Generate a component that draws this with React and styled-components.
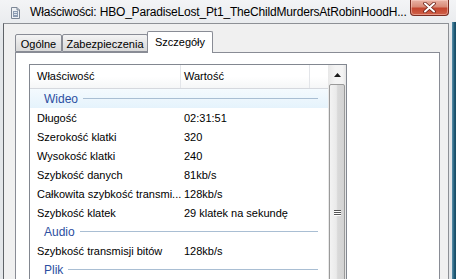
import React from "react";
import styled, { createGlobalStyle } from "styled-components";

const Global = createGlobalStyle`
  html, body { margin: 0; padding: 0; }
  body { width: 456px; height: 279px; overflow: hidden; background: #e6e9ec; }
  #root { width: 456px; height: 279px; }
`;

const UI_FONT = `"Liberation Sans", Arial, sans-serif`;

const Window = styled.div`
  display: flex;
  width: 456px;
  height: 279px;
  overflow: hidden;
  font-family: ${UI_FONT};
  background: linear-gradient(#f3f4f6, #e3e6e9 40px, #e3e6e9);
`;

const Main = styled.div`
  display: flex;
  flex-direction: column;
  width: 452px;
  min-height: 0;
`;

const EdgeStrip = styled.div`
  width: 4px;
  margin-top: 22px;
  background: linear-gradient(90deg, #5d93ad, #1f5a76 60%, #174a63);
`;

const TitleBar = styled.div`
  display: flex;
  align-items: flex-start;
  height: 23px;
  flex-shrink: 0;
`;

const AppIcon = styled.svg`
  width: 9px;
  height: 12px;
  margin: 7px 0 0 11px;
  flex-shrink: 0;
`;

const TitleText = styled.div`
  margin: 4px 0 0 10px;
  font-size: 12px;
  line-height: 16px;
  color: #000;
  white-space: nowrap;
  letter-spacing: -0.18px;
`;

const CloseButton = styled.div`
  margin-left: auto;
  margin-right: 3px;
  width: 39px;
  height: 16px;
  box-sizing: border-box;
  border: 1px solid #7a2d22;
  border-top: none;
  border-radius: 0 0 4px 4px;
  background: linear-gradient(#eab3a5, #d98b78 45%, #c4452e 55%, #d0624a);
  display: flex;
  align-items: center;
  justify-content: center;
  box-shadow: inset 0 0 0 1px rgba(255, 220, 210, 0.45);
`;

const FrameBody = styled.div`
  flex: 1;
  display: flex;
  padding-left: 3px;
  min-height: 0;
`;

const Client = styled.div`
  width: 446px;
  box-sizing: border-box;
  border-left: 1px solid #5f6368;
  border-top: 1px solid #8d9095;
  border-right: 1px solid #8d9095;
  background: #f0f0f0;
  padding: 7px 8px 0 11px;
  display: flex;
  flex-direction: column;
  min-height: 0;
`;

const TabStrip = styled.div`
  display: flex;
  align-items: flex-end;
  height: 21px;
  position: relative;
  z-index: 1;
`;

const Tab = styled.div`
  box-sizing: border-box;
  width: ${(p) => p.$w}px;
  height: ${(p) => (p.$active ? 22 : 18)}px;
  margin-bottom: ${(p) => (p.$active ? -1 : 0)}px;
  margin-left: ${(p) => p.$ml || 0}px;
  border: 1px solid #898c95;
  border-bottom: ${(p) => (p.$active ? "none" : "1px solid #898c95")};
  border-radius: 2px 2px 0 0;
  background: ${(p) =>
    p.$active ? "#ffffff" : "linear-gradient(#f4f4f4, #e6e6e6 50%, #dadada)"};
  font-size: 11px;
  color: #000;
  display: flex;
  justify-content: center;
  padding-top: ${(p) => (p.$active ? 3 : 2)}px;
  line-height: 14px;
  white-space: nowrap;
`;

const Panel = styled.div`
  flex: 1;
  box-sizing: border-box;
  width: 425px;
  border: 1px solid #898c95;
  border-bottom: none;
  background: #ffffff;
  padding: 11px 0 0 13px;
  min-height: 0;
`;

const ListView = styled.div`
  display: flex;
  width: 318px;
  height: 260px;
  box-sizing: border-box;
  border: 1px solid #828790;
  border-bottom: none;
  background: #fff;
`;

const ListBody = styled.div`
  width: 298px;
  display: flex;
  flex-direction: column;
`;

const Header = styled.div`
  display: flex;
  height: 23px;
  border-bottom: 1px solid #d5d8de;
  background: linear-gradient(#ffffff, #ffffff 50%, #f5f6f7);
  flex-shrink: 0;
`;

const HeaderCell = styled.div`
  box-sizing: border-box;
  width: ${(p) => p.$w}px;
  flex: ${(p) => (p.$fill ? 1 : "none")};
  padding-left: ${(p) => p.$pl || 0}px;
  border-right: ${(p) => (p.$fill ? "none" : "1px solid #e3e5e9")};
  font-size: 11px;
  line-height: 23px;
  color: #000;
  white-space: nowrap;
`;

const Row = styled.div`
  display: flex;
  height: 19px;
  align-items: center;
  font-size: 11px;
  color: #000;
  white-space: nowrap;
  flex-shrink: 0;
`;

const NameCell = styled.div`
  width: 151px;
  box-sizing: border-box;
  padding-left: 7px;
  overflow: hidden;
`;

const ValueCell = styled.div`
  padding-left: 3px;
`;

const GroupRow = styled.div`
  display: flex;
  align-items: center;
  height: 19px;
  padding: 0 10px 0 14px;
  flex-shrink: 0;
  background: ${(p) =>
    p.$hot ? "linear-gradient(#f4fafe, #e5f3fc)" : "transparent"};
`;

const GroupLabel = styled.span`
  font-size: 12px;
  color: #2c4fa1;
  white-space: nowrap;
`;

const GroupLine = styled.div`
  flex: 1;
  height: 1px;
  margin-left: 5px;
  background: #a9bed3;
`;

const ScrollBar = styled.div`
  width: 18px;
  display: flex;
  flex-direction: column;
  background: linear-gradient(90deg, #e8e8e8, #f4f4f4 40%, #f4f4f4 80%, #e6e6e6);
  overflow: hidden;
`;

const ScrollArrow = styled.div`
  height: 19px;
  display: flex;
  align-items: center;
  justify-content: center;
  flex-shrink: 0;
`;

const Thumb = styled.div`
  margin: 0 1px;
  height: 256px;
  flex-shrink: 0;
  box-sizing: border-box;
  border: 1px solid #9a9a9a;
  border-radius: 2px;
  background: linear-gradient(90deg, #f3f3f3, #eaeaea 45%, #d9d9d9 55%, #d3d3d3);
  display: flex;
  align-items: center;
  justify-content: center;
`;

const Grip = styled.div`
  width: 7px;
  display: flex;
  flex-direction: column;
  gap: 1px;
`;

const GripLine = styled.div`
  height: 1px;
  width: 7px;
  background: #555;
  box-shadow: 0 1px 0 #ffffff;
`;

const rows = [
  { type: "group", label: "Wideo", hot: true },
  { name: "Długość", value: "02:31:51" },
  { name: "Szerokość klatki", value: "320" },
  { name: "Wysokość klatki", value: "240" },
  { name: "Szybkość danych", value: "81kb/s" },
  { name: "Całkowita szybkość transmi...", value: "128kb/s" },
  { name: "Szybkość klatek", value: "29 klatek na sekundę" },
  { type: "group", label: "Audio" },
  { name: "Szybkość transmisji bitów", value: "128kb/s" },
  { type: "group", label: "Plik" },
];

export default function App() {
  return (
    <>
      <Global />
      <Window>
        <Main>
          <TitleBar>
            <AppIcon viewBox="0 0 9 12">
              <path d="M0.5 0.5 H6 L8.5 3 V11.5 H0.5 Z" fill="#eef1f5" stroke="#7d8796" />
              <path d="M6 0.5 V3 H8.5" fill="#cfd6df" stroke="#7d8796" />
              <rect x="2" y="4" width="5" height="6" fill="#8d9cb2" />
              <rect x="3" y="5" width="3" height="1" fill="#dfe6ef" />
              <rect x="3" y="7" width="3" height="1" fill="#dfe6ef" />
            </AppIcon>
            <TitleText>Właściwości: HBO_ParadiseLost_Pt1_TheChildMurdersAtRobinHoodH...</TitleText>
            <CloseButton>
              <svg width="13" height="11" viewBox="0 0 13 11">
                <path d="M2 1.5 L11 9.5 M11 1.5 L2 9.5" stroke="#6b2118" strokeWidth="3.6" strokeLinecap="round" />
                <path d="M2 1.5 L11 9.5 M11 1.5 L2 9.5" stroke="#ffffff" strokeWidth="2" strokeLinecap="round" />
              </svg>
            </CloseButton>
          </TitleBar>
          <FrameBody>
            <Client>
              <TabStrip>
                <Tab $w={47}>Ogólne</Tab>
                <Tab $w={86}>Zabezpieczenia</Tab>
                <Tab $w={66} $active $ml={-1}>Szczegóły</Tab>
              </TabStrip>
              <Panel>
                <ListView>
                  <ListBody>
                    <Header>
                      <HeaderCell $w={151} $pl={7}>Właściwość</HeaderCell>
                      <HeaderCell $w={129} $pl={3}>Wartość</HeaderCell>
                      <HeaderCell $fill />
                    </Header>
                    {rows.map((r, i) =>
                      r.type === "group" ? (
                        <GroupRow key={i} $hot={r.hot}>
                          <GroupLabel>{r.label}</GroupLabel>
                          <GroupLine />
                        </GroupRow>
                      ) : (
                        <Row key={i}>
                          <NameCell>{r.name}</NameCell>
                          <ValueCell>{r.value}</ValueCell>
                        </Row>
                      )
                    )}
                  </ListBody>
                  <ScrollBar>
                    <ScrollArrow>
                      <svg width="7" height="4" viewBox="0 0 7 4">
                        <path d="M0 4 L3.5 0 L7 4 Z" fill="#1a1a1a" />
                      </svg>
                    </ScrollArrow>
                    <Thumb>
                      <Grip>
                        <GripLine />
                        <GripLine />
                        <GripLine />
                      </Grip>
                    </Thumb>
                  </ScrollBar>
                </ListView>
              </Panel>
            </Client>
          </FrameBody>
        </Main>
        <EdgeStrip />
      </Window>
    </>
  );
}
